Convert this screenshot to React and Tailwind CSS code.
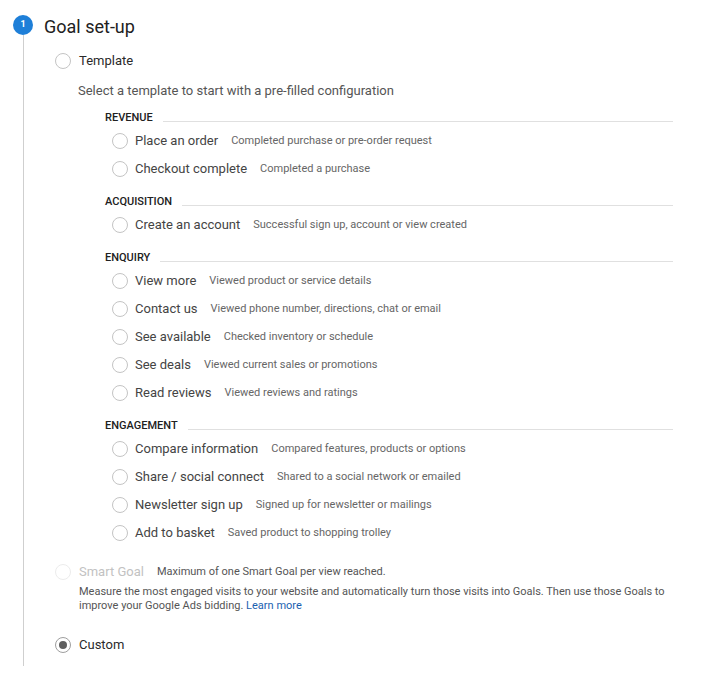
const groups = [
  {
    title: "REVENUE",
    items: [
      ["Place an order", "Completed purchase or pre-order request"],
      ["Checkout complete", "Completed a purchase"],
    ],
  },
  {
    title: "ACQUISITION",
    items: [["Create an account", "Successful sign up, account or view created"]],
  },
  {
    title: "ENQUIRY",
    items: [
      ["View more", "Viewed product or service details"],
      ["Contact us", "Viewed phone number, directions, chat or email"],
      ["See available", "Checked inventory or schedule"],
      ["See deals", "Viewed current sales or promotions"],
      ["Read reviews", "Viewed reviews and ratings"],
    ],
  },
  {
    title: "ENGAGEMENT",
    items: [
      ["Compare information", "Compared features, products or options"],
      ["Share / social connect", "Shared to a social network or emailed"],
      ["Newsletter sign up", "Signed up for newsletter or mailings"],
      ["Add to basket", "Saved product to shopping trolley"],
    ],
  },
];

function Radio({ checked, disabled }) {
  return (
    <span
      className={
        "flex h-4 w-4 shrink-0 items-center justify-center rounded-full border " +
        (disabled ? "border-[#ececec]" : checked ? "border-[#9e9e9e]" : "border-[#c4c4c4]")
      }
    >
      {checked && <span className="h-2 w-2 rounded-full bg-[#5f5f5f]" />}
    </span>
  );
}

export default function App() {
  return (
    <div className="h-[684px] w-[719px] bg-white font-['Roboto',sans-serif] text-[#212121]">
      <div className="flex pl-[13px] pt-[15px]">
        <div className="flex w-5 flex-col items-center">
          <div className="flex h-5 w-5 items-center justify-center rounded-full bg-[#1e7fd8] text-[9px] font-bold text-white">
            1
          </div>
          <div className="h-[631px] w-px bg-[#cfcfcf]" />
        </div>

        <div className="ml-[11px] flex-1 pr-[46px]">
          <h1 className="mt-[2px] h-5 text-[18px] leading-5">Goal set-up</h1>

          <div className="mt-[16px] flex h-4 items-center gap-[8px] pl-[11px]">
            <Radio />
            <span className="text-[13px] text-[#2a2a2a]">Template</span>
          </div>

          <p className="mt-[14px] h-4 pl-[34px] text-[13px] leading-4 text-[#555]">
            Select a template to start with a pre-filled configuration
          </p>

          <div className="mt-[13px] flex flex-col gap-[13px] pl-[61px]">
            {groups.map((g) => (
              <div key={g.title}>
                <div className="flex h-3 items-center">
                  <span className="text-[11px] font-medium leading-3 text-[#212121]">{g.title}</span>
                  <span className="ml-[10px] mt-[6px] h-px flex-1 bg-[#e0e0e0]" />
                </div>
                <div className="mt-[3px]">
                  {g.items.map(([label, desc]) => (
                    <div key={label} className="flex h-7 items-center pl-[7px]">
                      <Radio />
                      <span className="ml-[7px] text-[13px] text-[#444]">{label}</span>
                      <span className="ml-[13px] text-[11px] text-[#666]">{desc}</span>
                    </div>
                  ))}
                </div>
              </div>
            ))}
          </div>

          <div className="mt-[17px] pl-[11px]">
            <div className="flex h-4 items-center">
              <Radio disabled />
              <span className="ml-[8px] text-[13px] text-[#c2c2c2]">Smart Goal</span>
              <span className="ml-[13px] text-[11px] text-[#555]">
                Maximum of one Smart Goal per view reached.
              </span>
            </div>
            <p className="mt-[5px] pl-[24px] text-[11px] leading-[14px] text-[#555]">
              Measure the most engaged visits to your website and automatically turn those visits into Goals. Then use those Goals to improve your Google Ads bidding.{" "}
              <span className="text-[#1a5fb0]">Learn more</span>
            </p>
            <div className="mt-[24px] flex h-4 items-center">
              <Radio checked />
              <span className="ml-[8px] text-[13px] text-[#2a2a2a]">Custom</span>
            </div>
          </div>
        </div>
      </div>
    </div>
  );
}
